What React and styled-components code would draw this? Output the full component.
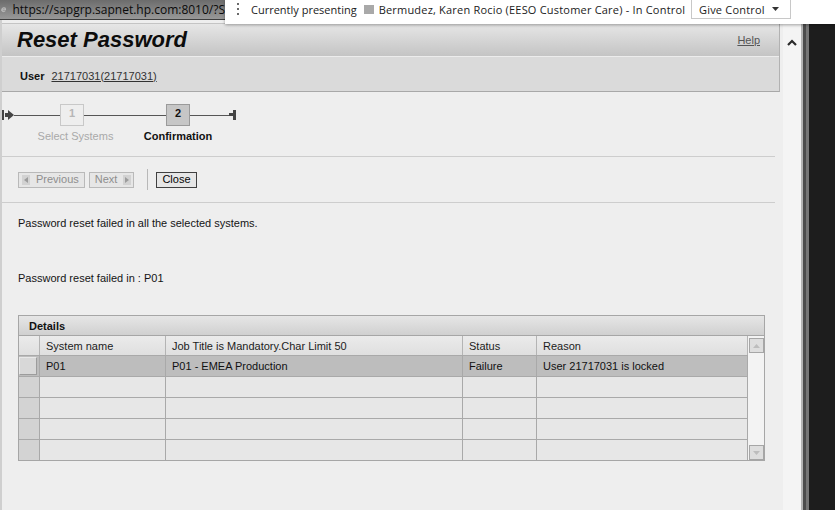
import React from "react";
import styled, { createGlobalStyle } from "styled-components";

const GlobalStyle = createGlobalStyle`
  *, *::before, *::after { box-sizing: border-box; }
  html, body { margin: 0; padding: 0; overflow: hidden; background: #1c1c1c; }
  body { font-family: "Liberation Sans", Arial, Helvetica, sans-serif; font-size: 11px; color: #1a1a1a; }
`;

const Screen = styled.div`
  position: relative;
  display: flex;
  width: 835px;
  height: 510px;
  overflow: hidden;
  background: #1c1c1c;
`;

const MainColumn = styled.div`
  display: flex;
  flex-direction: column;
  width: 783px;
  flex: none;
  background: #eeeeee;
`;

const AddressBar = styled.div`
  display: flex;
  align-items: center;
  gap: 6px;
  width: 225px;
  height: 20px;
  padding-left: 1px;
  background: linear-gradient(#6c6c6c, #989898);
  border-bottom: 1px solid #3e3e3e;
  font-family: "Open Sans", "Noto Sans", sans-serif;
  font-size: 12px;
  color: #0a0a0a;
  white-space: nowrap;
  overflow: hidden;
`;

const Page = styled.div`
  flex: 1;
  display: flex;
  flex-direction: column;
  background: #eeeeee;
  border-left: 2px solid #cfcfcf;
  padding-top: 3px;
`;

const Header = styled.header`
  margin-right: 3px;
  border-top: 1px solid #c4c4c4;
  border-right: 1px solid #b2b2b2;
  border-bottom: 1px solid #a8a8a8;
`;

const TitleBar = styled.div`
  height: 33px;
  display: flex;
  align-items: center;
  justify-content: space-between;
  padding: 0 19px 0 15px;
  background: linear-gradient(#e6e6e6, #c4c4c4);
  border-bottom: 1px solid #ececec;
`;

const Title = styled.h1`
  margin: 0;
  font-size: 22px;
  font-weight: bold;
  font-style: italic;
  color: #0c0c0c;
  line-height: 24px;
`;

const HelpLink = styled.a`
  color: #555555;
  text-decoration: underline;
  font-size: 11px;
`;

const UserRow = styled.div`
  height: 34px;
  display: flex;
  align-items: center;
  gap: 7px;
  padding: 3px 0 0 18px;
  background: #dadada;
`;

const UserLabel = styled.span`
  font-weight: bold;
  color: #111;
`;

const UserLink = styled.a`
  color: #333;
  text-decoration: underline;
`;

const RoadmapArea = styled.div`
  height: 64px;
  padding-top: 12px;
`;

const Track = styled.div`
  display: flex;
  align-items: flex-start;
`;

const Cap = styled.div`
  height: 22px;
  display: flex;
  align-items: center;
  flex: none;
`;

const Connector = styled.div`
  width: ${(p) => p.$w}px;
  height: 22px;
  flex: none;
  display: flex;
  align-items: center;
  &::before {
    content: "";
    display: block;
    width: 100%;
    height: 1px;
    background: #555;
  }
`;

const Step = styled.div`
  width: 24px;
  flex: none;
  display: flex;
  flex-direction: column;
  align-items: center;
`;

const StepBox = styled.div`
  width: 24px;
  height: 22px;
  padding-top: 2px;
  text-align: center;
  font-weight: bold;
  line-height: 13px;
  background: ${(p) => (p.$active ? "#c6c6c6" : "#eeeeee")};
  border: 1px solid ${(p) => (p.$active ? "#9a9a9a" : "#c8c8c8")};
  color: ${(p) => (p.$active ? "#111" : "#b6b6b6")};
`;

const StepLabel = styled.div`
  margin-top: 4px;
  margin-left: ${(p) => p.$shift || 0}px;
  white-space: nowrap;
  line-height: 13px;
  color: ${(p) => (p.$active ? "#111" : "#a9a9a9")};
  font-weight: ${(p) => (p.$active ? "bold" : "normal")};
`;

const Separator = styled.div`
  height: 1px;
  margin-right: 8px;
  background: #cdcdcd;
`;

const Toolbar = styled.div`
  height: 45px;
  display: flex;
  align-items: center;
  padding-left: 16px;
`;

const ToolButton = styled.button`
  height: 16px;
  display: inline-flex;
  align-items: center;
  gap: 6px;
  padding: ${(p) => p.$pad || "0 5px"};
  margin: 0 ${(p) => p.$mr || 0}px 0 0;
  font-family: "Liberation Sans", Arial, sans-serif;
  font-size: 11px;
  line-height: 13px;
  background: #e6e6e6;
  border: 1px solid ${(p) => (p.disabled ? "#b9b9b9" : "#404040")};
  color: ${(p) => (p.disabled ? "#8e8e8e" : "#050505")};
  border-radius: 0;
  cursor: default;
`;

const ToolDivider = styled.div`
  width: 1px;
  height: 21px;
  background: #b8b8b8;
  margin: 0 8px 0 13px;
`;

const Messages = styled.div`
  padding: 14px 0 0 16px;
`;

const Message = styled.p`
  margin: 0 0 ${(p) => p.$mb || 0}px 0;
  line-height: 13px;
  color: #141414;
`;

const Table = styled.div`
  margin: 30px 0 0 16px;
  width: 747px;
  border: 1px solid #a6a6a6;
`;

const TableTitle = styled.div`
  height: 20px;
  display: flex;
  align-items: center;
  padding-left: 10px;
  font-weight: bold;
  color: #111;
  background: linear-gradient(#e6e6e6, #d0d0d0);
  border-bottom: 1px solid #a6a6a6;
`;

const Grid = styled.div`
  display: grid;
  grid-template-columns: 21px 126px 297px 74px 211px 16px;
  grid-template-rows: 19px repeat(5, 21px);
`;

const HeadCell = styled.div`
  display: flex;
  align-items: center;
  padding-left: 6px;
  color: #1c1c1c;
  background: linear-gradient(#ebebeb, #dfdfdf);
  border-right: 1px solid #b4b4b4;
`;

const Cell = styled.div`
  display: flex;
  align-items: center;
  padding-left: 6px;
  color: #111;
  border-top: 1px solid #a9a9a9;
  border-right: 1px solid #a9a9a9;
  background: ${(p) => (p.$selected ? "#bdbdbd" : "#e7e7e7")};
`;

const SelectorCell = styled.div`
  border-top: 1px solid #a9a9a9;
  border-right: 1px solid #a9a9a9;
  background: ${(p) => (p.$selected ? "#bdbdbd" : "#d3d3d3")};
  padding: 1px 2px 1px 0;
  display: flex;
`;

const SelectorKnob = styled.div`
  flex: 1;
  background: #d8d8d8;
  border: 1px solid #9c9c9c;
  border-top-color: #e8e8e8;
  border-left-color: #e8e8e8;
`;

const ScrollColumn = styled.div`
  grid-column: 6;
  grid-row: 1 / span 6;
  display: flex;
  flex-direction: column;
  justify-content: space-between;
  align-items: center;
  padding: 2px 0 0 0;
  background: #f3f3f3;
`;

const ScrollButton = styled.div`
  width: 15px;
  height: 15px;
  display: flex;
  align-items: center;
  justify-content: center;
  background: #dedede;
  border: 1px solid #a6a6a6;
`;

const WindowScroll = styled.div`
  width: 18px;
  flex: none;
  background: #f4f4f4;
  display: flex;
  justify-content: center;
  padding-top: 39px;
`;

const WindowEdge = styled.div`
  width: 8px;
  flex: none;
  background: linear-gradient(to right, #b4b4b4 0 2px, #4c4c4c 2px 5px, #767676 5px 8px);
`;

const DarkArea = styled.div`
  flex: 1;
  background: #1d1d1d;
`;

const Banner = styled.div`
  position: absolute;
  top: 0;
  left: 225px;
  right: 0;
  height: 24px;
  background: #ffffff;
  box-shadow: 0 1px 3px rgba(0, 0, 0, 0.35);
  font-family: "Open Sans", "Noto Sans", sans-serif;
  font-size: 11px;
  color: #1b1b1b;
  white-space: nowrap;
`;

const BannerRow = styled.div`
  height: 18px;
  display: flex;
  align-items: center;
  padding-left: 12px;
`;

const Grip = styled.div`
  display: flex;
  flex-direction: column;
  gap: 3px;
  flex: none;
  span {
    display: block;
    width: 2px;
    height: 2px;
    background: #6a6a6a;
  }
`;

const BannerLabel = styled.span`
  flex: none;
  margin-left: ${(p) => p.$ml || 0}px;
  letter-spacing: ${(p) => p.$ls || 0}px;
`;

const Swatch = styled.span`
  flex: none;
  width: 10px;
  height: 9px;
  margin-left: 7px;
  background: #a9a9a9;
`;

const GiveControl = styled.div`
  flex: none;
  align-self: flex-start;
  margin: -1px 44px 0 auto;
  height: 20px;
  width: 100px;
  display: flex;
  align-items: center;
  gap: 7px;
  padding-left: 7px;
  border: 1px solid #c8c8c8;
  background: #fff;
  letter-spacing: 0.2px;
`;

const StartIcon = () => (
  <svg width="12" height="10" viewBox="0 0 12 10">
    <rect x="0" y="0" width="2" height="10" fill="#444" />
    <rect x="3" y="3" width="4" height="4" fill="#444" />
    <polygon points="6,0 12,5 6,10" fill="#444" />
  </svg>
);

const EndIcon = () => (
  <svg width="8" height="10" viewBox="0 0 8 10">
    <rect x="0" y="3" width="5" height="3" fill="#444" />
    <rect x="4" y="0" width="3" height="10" fill="#444" />
  </svg>
);

const NavIcon = ({ dir }) => (
  <svg width="8" height="10" viewBox="0 0 8 10">
    <rect x="0" y="0" width="8" height="10" fill="#d2d2d2" />
    {dir === "left" ? (
      <polygon points="6,2 6,8 2,5" fill="#9c9c9c" />
    ) : (
      <polygon points="2,2 2,8 6,5" fill="#9c9c9c" />
    )}
  </svg>
);

const Tri = ({ up }) => (
  <svg width="7" height="4" viewBox="0 0 7 4">
    <polygon points={up ? "0,4 7,4 3.5,0" : "0,0 7,0 3.5,4"} fill="#bdbdbd" />
  </svg>
);

const IELogo = () => (
  <svg width="13" height="13" viewBox="0 0 13 13">
    <circle cx="6.5" cy="7" r="4.6" fill="none" stroke="#c9c9c9" strokeWidth="2.2" />
    <rect x="2.5" y="6.2" width="8.5" height="1.8" fill="#c9c9c9" />
    <rect x="8" y="8.2" width="4" height="3" fill="#8c8c8c" />
    <ellipse cx="6.5" cy="6.5" rx="6.3" ry="2.6" fill="none" stroke="#bdbdbd" strokeWidth="0.9" transform="rotate(-30 6.5 6.5)" />
  </svg>
);

const rows = [
  { sys: "P01", job: "P01 - EMEA Production", status: "Failure", reason: "User 21717031 is locked", selected: true },
  { sys: "", job: "", status: "", reason: "" },
  { sys: "", job: "", status: "", reason: "" },
  { sys: "", job: "", status: "", reason: "" },
  { sys: "", job: "", status: "", reason: "" },
];

export default function App() {
  return (
    <>
      <GlobalStyle />
      <Screen>
        <MainColumn>
          <AddressBar>
            <IELogo />
            <span>https://sapgrp.sapnet.hp.com:8010/?S</span>
          </AddressBar>
          <Page>
            <Header>
              <TitleBar>
                <Title>Reset Password</Title>
                <HelpLink>Help</HelpLink>
              </TitleBar>
              <UserRow>
                <UserLabel>User</UserLabel>
                <UserLink>21717031(21717031)</UserLink>
              </UserRow>
            </Header>

            <RoadmapArea>
              <Track>
                <Cap>
                  <StartIcon />
                </Cap>
                <Connector $w={46} />
                <Step>
                  <StepBox>1</StepBox>
                  <StepLabel $shift={7}>Select Systems</StepLabel>
                </Step>
                <Connector $w={82} />
                <Step>
                  <StepBox $active>2</StepBox>
                  <StepLabel $active>Confirmation</StepLabel>
                </Step>
                <Connector $w={39} />
                <Cap>
                  <EndIcon />
                </Cap>
              </Track>
            </RoadmapArea>

            <Separator />

            <Toolbar>
              <ToolButton disabled $pad="0 5px 0 3px" $mr={4}>
                <NavIcon dir="left" />
                Previous
              </ToolButton>
              <ToolButton disabled $pad="0 2px 0 5px">
                Next
                <NavIcon dir="right" />
              </ToolButton>
              <ToolDivider />
              <ToolButton>Close</ToolButton>
            </Toolbar>

            <Separator />

            <Messages>
              <Message $mb={42}>Password reset failed in all the selected systems.</Message>
              <Message>Password reset failed in : P01</Message>
            </Messages>

            <Table>
              <TableTitle>Details</TableTitle>
              <Grid>
                <HeadCell />
                <HeadCell>System name</HeadCell>
                <HeadCell>Job Title is Mandatory.Char Limit 50</HeadCell>
                <HeadCell>Status</HeadCell>
                <HeadCell>Reason</HeadCell>
                <ScrollColumn>
                  <ScrollButton>
                    <Tri up />
                  </ScrollButton>
                  <ScrollButton>
                    <Tri />
                  </ScrollButton>
                </ScrollColumn>
                {rows.map((r, i) => (
                  <React.Fragment key={i}>
                    <SelectorCell $selected={r.selected}>
                      {r.selected && <SelectorKnob />}
                    </SelectorCell>
                    <Cell $selected={r.selected}>{r.sys}</Cell>
                    <Cell $selected={r.selected}>{r.job}</Cell>
                    <Cell $selected={r.selected}>{r.status}</Cell>
                    <Cell $selected={r.selected}>{r.reason}</Cell>
                  </React.Fragment>
                ))}
              </Grid>
            </Table>
          </Page>
        </MainColumn>
        <WindowScroll>
          <svg width="10" height="7" viewBox="0 0 10 7">
            <polyline points="1,6 5,2 9,6" fill="none" stroke="#2a2a2a" strokeWidth="2.2" />
          </svg>
        </WindowScroll>
        <WindowEdge />
        <DarkArea />

        <Banner>
          <BannerRow>
            <Grip>
              <span />
              <span />
              <span />
            </Grip>
            <BannerLabel $ml={12}>Currently presenting</BannerLabel>
            <Swatch />
            <BannerLabel $ml={5} $ls={0.2}>Bermudez, Karen Rocio (EESO Customer Care) - In Control</BannerLabel>
            <GiveControl>
              <span>Give Control</span>
              <svg width="7" height="4" viewBox="0 0 7 4">
                <polygon points="0,0 7,0 3.5,4" fill="#333" />
              </svg>
            </GiveControl>
          </BannerRow>
        </Banner>
      </Screen>
    </>
  );
}
